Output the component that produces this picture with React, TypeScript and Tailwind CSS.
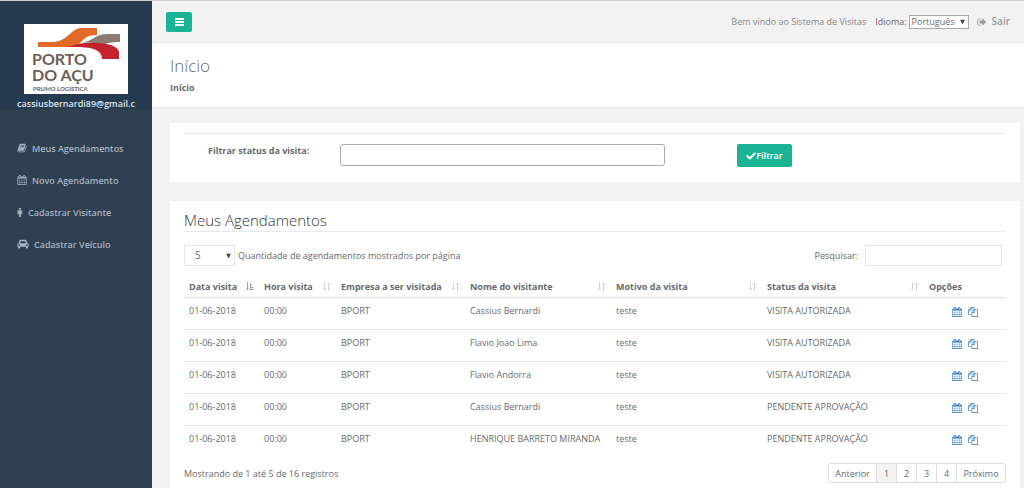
import { ReactNode } from "react";
import { FaCheck } from "react-icons/fa";

type IconProps = {
    path: string;
    viewBox?: string;
    className?: string;
}

type Visit = {
    data: string;
    hora: string;
    empresa: string;
    visitante: string;
    motivo: string;
    status: string;
}

const icons = {
    calendar: "M192 1664h288v-288h-288v288zm352 0h320v-288h-320v288zm-352-352h288v-320h-288v320zm352 0h320v-320h-320v320zm-352-384h288v-288h-288v288zm736 736h320v-288h-320v288zm-384-736h320v-288h-320v288zm768 736h288v-288h-288v288zm-384-352h320v-320h-320v320zm-352-864v-288q0-13-9.500-22.500t-22.500-9.500h-64q-13 0-22.500 9.500t-9.500 22.500v288q0 13 9.500 22.500t22.500 9.500h64q13 0 22.500-9.500t9.500-22.500zm736 864h288v-320h-288v320zm-384-384h320v-288h-320v288zm384 0h288v-288h-288v288zm32-480v-288q0-13-9.500-22.500t-22.500-9.500h-64q-13 0-22.500 9.500t-9.500 22.500v288q0 13 9.500 22.500t22.500 9.500h64q13 0 22.500-9.500t9.500-22.500zm384-64v1280q0 52-38 90t-90 38h-1408q-52 0-90-38t-38-90v-1280q0-52 38-90t90-38h128v-96q0-66 47-113t113-47h64q66 0 113 47t47 113v96h384v-96q0-66 47-113t113-47h64q66 0 113 47t47 113v96h128q52 0 90 38t38 90z",
    files: "M1696 384q40 0 68 28t28 68v1216q0 40-28 68t-68 28h-960q-40 0-68-28t-28-68v-288h-544q-40 0-68-28t-28-68v-672q0-40 20-88t48-76l408-408q28-28 76-48t88-20h416q40 0 68 28t28 68v328q68-40 128-40h416zm-544 213l-299 299h299v-299zm-640-384l-299 299h299v-299zm196 647l316-316v-416h-384v416q0 40-28 68t-68 28h-416v640h512v-256q0-40 20-88t48-76zm956 804v-1152h-384v416q0 40-28 68t-68 28h-416v640h896z",
    signOut: "M704 1440q0 4 1 20t.5 26.500-3 23.500-10 19.500-20.500 6.500h-320q-119 0-203.500-84.500t-84.500-203.500v-704q0-119 84.500-203.500t203.500-84.500h320q13 0 22.500 9.500t9.500 22.500q0 4 1 20t.5 26.500-3 23.500-10 19.500-20.500 6.500h-320q-66 0-113 47t-47 113v704q0 66 47 113t113 47h312l11.500 1 11.500 3 8 5.500 7 9 2 13.500zm928-544q0 26-19 45l-544 544q-19 19-45 19t-45-19-19-45v-288h-448q-26 0-45-19t-19-45v-384q0-26 19-45t45-19h448v-288q0-26 19-45t45-19 45 19l544 544q19 19 19 45z",
    book: "M1703 478q40 57 18 129l-275 906q-19 64-76.500 107.500t-122.500 43.500h-923q-77 0-148.500-53.500t-99.500-131.500q-24-67-2-127 0-4 3-27t4-37q1-8-3-21.500t-3-19.500q2-11 8-21t16.500-23.500 16.500-23.500q23-38 45-91.500t30-91.500q3-10 .5-30t-.5-28q3-11 17-28t17-23q21-36 42-92t25-90q1-9-2.500-32t.5-28q4-13 22-30.500t22-22.500q19-26 42.500-84.500t27.500-96.500q1-8-3-25.500t-2-26.500q2-8 9-18t18-23 17-21q8-12 16.500-30.500t15-35 16-36 19.500-32 26.500-23.500 36-11.500 47.500 5.500l-1 3q38-9 51-9h761q74 0 114 56t18 130l-274 906q-36 119-71.500 153.500t-128.500 34.500h-869q-27 0-38 15-11 16-1 43 24 70 144 70h923q29 0 56-15.500t35-41.500l300-987q7-22 5-57 38 15 59 43zm-1064 2q-4 13 2 22.500t20 9.500h608q13 0 25.500-9.500t16.500-22.500l21-64q4-13-2-22.500t-20-9.500h-608q-13 0-25.500 9.500t-16.500 22.500zm-83 256q-4 13 2 22.500t20 9.500h608q13 0 25.500-9.500t16.500-22.500l21-64q4-13-2-22.500t-20-9.500h-608q-13 0-25.500 9.500t-16.500 22.500z",
    male: "M896 128a200 200 0 1 1 0 400 200 200 0 0 1 0-400zM672 576h448q80 0 136 56t56 136v416q0 96-96 96t-96-96v-352h-32v880q0 96-104 96-88 0-88-96v-432h-32v432q0 96-88 96-104 0-104-96v-880h-32v352q0 96-96 96t-96-96v-416q0-80 56-136t136-56z",
    car: "M480 1088q0-66-47-113t-113-47-113 47-47 113 47 113 113 47 113-47 47-113zm36-320h1016l-89-357q-2-8-14-17.500t-21-9.500h-768q-9 0-21 9.500t-14 17.500zm1372 320q0-66-47-113t-113-47-113 47-47 113 47 113 113 47 113-47 47-113zm160-96v384q0 14-9 23t-23 9h-96v128q0 80-56 136t-136 56-136-56-56-136v-128h-1024v128q0 80-56 136t-136 56-136-56-56-136v-128h-96q-14 0-23-9t-9-23v-384q0-93 65.500-158.500t158.500-65.500h28l105-419q23-94 104-157.500t179-63.500h768q98 0 179 63.500t104 157.500l105 419h28q93 0 158.500 65.500t65.500 158.500z",
};

const columns = [
    "Data visita",
    "Hora visita",
    "Empresa a ser visitada",
    "Nome do visitante",
    "Motivo da visita",
    "Status da visita",
];

const base = { data: "01-06-2018", hora: "00:00", empresa: "BPORT", motivo: "teste" };

const visits: Visit[] = [
    { ...base, visitante: "Cassius Bernardi", status: "VISITA AUTORIZADA" },
    { ...base, visitante: "Flavio Joao Lima", status: "VISITA AUTORIZADA" },
    { ...base, visitante: "Flavio Andorra", status: "VISITA AUTORIZADA" },
    { ...base, visitante: "Cassius Bernardi", status: "PENDENTE APROVAÇÃO" },
    { ...base, visitante: "HENRIQUE BARRETO MIRANDA", status: "PENDENTE APROVAÇÃO" },
];

const Icon = ({ path, viewBox = "0 0 1792 1792", className = "size-[10px]" }: IconProps) => (
    <svg viewBox={viewBox} className={className} fill="currentColor" aria-hidden="true">
        <path d={path} />
    </svg>
)

const Caret = () => (
    <svg viewBox="0 0 5 5" className="pointer-events-none absolute right-1 top-1/2 size-[5px] -translate-y-1/2" aria-hidden="true">
        <path d="M0 0h5L2.500 5z" fill="#444" />
    </svg>
)

const Logo = () => (
    <svg viewBox="0 0 104 70" className="h-[70px] w-[104px] shrink-0 bg-white" role="img" aria-label="Porto do Açu">
        <path d="M14 18h14c9 0 13-4 18-8 5-5 8-6 12-6h15v7c-8 0-11 2-15 6-5 5-9 6-16 6H14z" fill="#e06a26" />
        <path d="M56 19c7-1 10-3 14-5 5-3 8-4 13-4h13v8c-8 0-13 1-19 3-6-2-13-3-21-2z" fill="#8b7d72" />
        <path d="M40 23c8 0 12-4 22-4 21-1 32 3 33 9v7H78c0-6-4-9-12-11-6-1-14-1-26-1z" fill="#c4242f" />
        <g fill="#6f6056" fontFamily="Lato, sans-serif" fontWeight="700">
            <text x="8" y="41" fontSize="16">PORTO</text>
            <text x="8" y="57" fontSize="16">DO AÇU</text>
            <text x="9" y="67" fontSize="6">PRUMO LOGÍSTICA</text>
        </g>
    </svg>
)

const SortIcon = ({ active }: { active: boolean }) => (
    <svg viewBox="0 0 9 9" className={active ? "h-[9px] w-[9px] shrink-0 text-[#a0a0a0]" : "h-[9px] w-[9px] shrink-0 text-[#d2d2d2]"} fill="none" stroke="currentColor" aria-hidden="true">
        <path d="M2.500 0v8M1 6.500L2.500 8 4 6.500" />
        {active ? <path d="M5 1.500h1M5 3.500h2M5 5.500h3M5 7.500h4M5.500 1v7" /> : <path d="M6.500 9V1M5 2.500L6.500 1 8 2.500" />}
    </svg>
)

const MenuItem = ({ icon, children }: { icon: ReactNode, children: ReactNode }) => (
    <li>
        <a href="#" className="flex h-8 items-center gap-[5px] px-[17px]">
            {icon}
            {children}
        </a>
    </li>
)

const Sidebar = () => (
    <aside className="w-[152px] shrink-0 bg-[#2f4050] font-semibold text-[#a7b1c2]">
        <div className="flex h-[108px] flex-col items-center bg-[#263b4f] pt-[23px]">
            <Logo />
            <span className="mt-[3px] leading-[14px] text-[#dfe4ed]">cassiusbernardi89@gmail.c</span>
        </div>
        <nav className="pt-[23px]">
            <ul>
                <MenuItem icon={<Icon path={icons.book} />}>Meus Agendamentos</MenuItem>
                <MenuItem icon={<Icon path={icons.calendar} />}>Novo Agendamento</MenuItem>
                <MenuItem icon={<Icon path={icons.male} viewBox="480 0 832 1792" className="h-[10px] w-[6px]" />}>Cadastrar Visitante</MenuItem>
                <MenuItem icon={<Icon path={icons.car} viewBox="0 0 2048 1792" className="h-[10px] w-3" />}>Cadastrar Veículo</MenuItem>
            </ul>
        </nav>
    </aside>
)

const TopBar = () => (
    <header className="flex h-[42px] items-center justify-between border-b border-[#e7eaec] px-[14px]">
        <button type="button" aria-label="Menu" className="flex h-5 w-[26px] items-center justify-center rounded-[2px] bg-[#1ab394] text-white">
            <svg viewBox="0 0 9 8" className="h-2 w-[9px]" fill="currentColor" aria-hidden="true">
                <path d="M0 0h9v2H0zM0 3h9v2H0zM0 6h9v2H0z" />
            </svg>
        </button>
        <div className="flex items-center text-[#888]">
            <span>Bem vindo ao Sistema de Visitas</span>
            <label htmlFor="idioma" className="ml-[9px] text-[#676a6c]">Idioma:</label>
            <div className="relative ml-[2px]">
                <select id="idioma" className="block h-[14px] w-[60px] appearance-none border border-[#a9a9a9] bg-white pl-[2px] leading-[12px] text-[#676a6c]">
                    <option>Português</option>
                </select>
                <Caret />
            </div>
            <a href="#" className="ml-2 flex items-center gap-[5px] text-[10px] font-semibold text-[#999c9e]">
                <Icon path={icons.signOut} />
                Sair
            </a>
        </div>
    </header>
)

const Filter = () => (
    <section className="h-[59px] bg-white px-[14px] pt-[10px]">
        <form className="grid grid-cols-[156px_1fr_341px] border-t border-[#e7eaec] pt-[10px]">
            <label htmlFor="status" className="pl-6 leading-[14px] font-bold">Filtrar status da visita:</label>
            <input id="status" type="text" className="h-[22px] w-full rounded-[3px] border border-[#aaa] bg-white px-2" />
            <div className="pl-18">
                <button type="button" className="flex h-[23px] w-[55px] items-center justify-center rounded-[2px] bg-[#1ab394] font-semibold text-white">
                    <FaCheck className="size-[10px]" />
                    Filtrar
                </button>
            </div>
        </form>
    </section>
)

const VisitsTable = () => (
    <table className="mt-[10px] w-full table-fixed text-left">
        <colgroup>
            <col className="w-[75px]" />
            <col className="w-[77px]" />
            <col className="w-[129px]" />
            <col className="w-[146px]" />
            <col className="w-[151px]" />
            <col className="w-[162px]" />
            <col />
        </colgroup>
        <thead>
            <tr className="h-[21px] border-b border-[#ddd]">
                {columns.map((title, index) => (
                    <th key={title} className="px-[5px] font-bold whitespace-nowrap">
                        <div className="flex items-center justify-between">
                            {title}
                            <SortIcon active={index === 0} />
                        </div>
                    </th>
                ))}
                <th className="pl-[5px] font-bold">Opções</th>
            </tr>
        </thead>
        <tbody>
            {visits.map((item, index) => (
                <tr key={index} className="h-8 border-b border-[#e7eaec] align-top last:border-b-0 [&>td]:px-[5px] [&>td]:pt-[6px] [&>td]:whitespace-nowrap">
                    <td>{item.data}</td>
                    <td>{item.hora}</td>
                    <td>{item.empresa}</td>
                    <td>{item.visitante}</td>
                    <td>{item.motivo}</td>
                    <td>{item.status}</td>
                    <td>
                        <div className="flex justify-center gap-[6px] pt-[3px] text-[#337ab7]">
                            <a href="#" aria-label="Agendamento"><Icon path={icons.calendar} /></a>
                            <a href="#" aria-label="Copiar"><Icon path={icons.files} /></a>
                        </div>
                    </td>
                </tr>
            ))}
        </tbody>
    </table>
)

const Pagination = () => (
    <div className="flex items-center justify-between pt-[6px]">
        <p>Mostrando de 1 até 5 de 16 registros</p>
        <div className="flex h-5 divide-x divide-[#ddd] rounded-[3px] border border-[#ddd] bg-white">
            <button type="button" className="w-12">Anterior</button>
            <button type="button" className="w-5 bg-[#f4f4f4]">1</button>
            <button type="button" className="w-5">2</button>
            <button type="button" className="w-5">3</button>
            <button type="button" className="w-5">4</button>
            <button type="button" className="w-12">Próximo</button>
        </div>
    </div>
)

const Appointments = () => (
    <section className="flex-1 bg-white px-[14px] pt-[9px]">
        <h2 className="border-b border-[#e7eaec] pb-[1px] text-[15px] leading-5 font-light text-[#333]">Meus Agendamentos</h2>
        <div className="mt-[13px] flex items-center justify-between pr-1">
            <div className="flex items-center gap-[3px]">
                <div className="relative">
                    <select id="quantidade" className="block h-[21px] w-[51px] appearance-none border border-[#e5e6e7] bg-white pl-[10px] text-[10px]">
                        <option>5</option>
                    </select>
                    <Caret />
                </div>
                <label htmlFor="quantidade">Quantidade de agendamentos mostrados por página</label>
            </div>
            <div className="flex items-center gap-[7px]">
                <label htmlFor="pesquisar">Pesquisar:</label>
                <input id="pesquisar" type="search" className="h-[21px] w-[137px] border border-[#e5e6e7] bg-white px-2" />
            </div>
        </div>
        <VisitsTable />
        <Pagination />
    </section>
)

export default function App() {
    return (
        <div className="flex min-h-screen border-t border-[#d0d0d0] bg-[#f2f2f2] text-[9px] leading-[13px] text-[#676a6c]" style={{ fontFamily: '"Open Sans", sans-serif' }}>
            <Sidebar />
            <main className="flex min-w-0 flex-1 flex-col">
                <TopBar />
                <div className="h-[65px] border-b border-[#e7eaec] bg-white px-[18px] pt-3">
                    <h1 className="text-[17px] leading-[22px] font-light">Início</h1>
                    <p className="mt-1 leading-[14px] font-bold">Início</p>
                </div>
                <div className="flex flex-1 flex-col gap-[19px] pt-[15px] pr-1 pl-[18px]">
                    <Filter />
                    <Appointments />
                </div>
            </main>
        </div>
    )
}
